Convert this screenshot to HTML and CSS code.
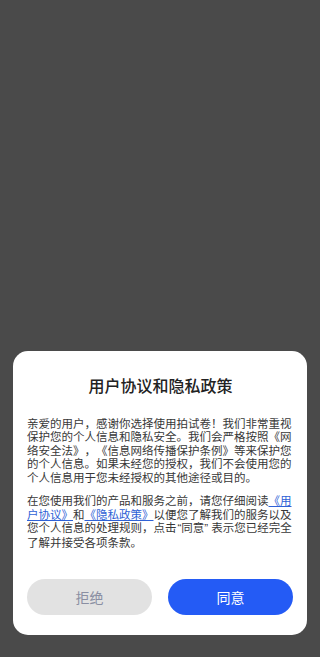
FILE: index.html
```html
<!DOCTYPE html>
<html lang="zh-CN">
<head>
    <meta charset="UTF-8">
    <meta name="viewport" content="width=device-width, initial-scale=1.0">
    <title>用户协议和隐私政策</title>
    <link rel="stylesheet" href="styles.css">
</head>
<body>
    <div class="mask">
        <div class="dialog">
            <h1 class="dialog-title">用户协议和隐私政策</h1>
            <div class="dialog-body">
                <p>亲爱的用户，感谢你选择使用拍试卷！我们非常重视保护您的个人信息和隐私安全。我们会严格按照《网络安全法》，《信息网络传播保护条例》等来保护您的个人信息。如果未经您的授权，我们不会使用您的个人信息用于您未经授权的其他途径或目的。</p>
                <p>在您使用我们的产品和服务之前，请您仔细阅读<a href="#" class="link">《用户协议》</a>和<a href="#" class="link">《隐私政策》</a>以便您了解我们的服务以及您个人信息的处理规则，点击<span class="quote">“</span>同意<span class="quote quote-close">”</span>表示您已经完全了解并接受各项条款。</p>
            </div>
            <div class="dialog-actions">
                <button class="btn btn-refuse">拒绝</button>
                <button class="btn btn-agree">同意</button>
            </div>
        </div>
    </div>
</body>
</html>
```

FILE: styles.css
```css
* {
    margin: 0;
    padding: 0;
    box-sizing: border-box;
    font-family: "Noto Sans CJK SC", "Noto Sans", sans-serif;
}

html, body {
    height: 100%;
}

body {
    background: #4a4a4a;
}

.mask {
    min-height: 100vh;
    display: flex;
    flex-direction: column;
    justify-content: flex-end;
    padding: 0 13px 22px;
}

.dialog {
    background: #fff;
    border-radius: 15px;
    padding: 21px 13px 20px 14px;
}

.dialog-title {
    font-size: 16px;
    font-weight: 500;
    color: #222;
    text-align: center;
    line-height: 26px;
    margin-bottom: 19px;
}

.dialog-body {
    font-size: 11.5px;
    line-height: 13.5px;
    color: #383838;
    text-spacing-trim: space-all;
}

.dialog-body p + p {
    margin-top: 10px;
}

.link {
    color: #2f62d6;
    text-decoration: underline;
}

.quote {
    font-family: "Liberation Sans", sans-serif;
    margin-left: 1px;
}

.quote-close {
    margin: 0 3px 0 0;
}

.dialog-actions {
    display: flex;
    gap: 16px;
    margin-top: 30px;
    padding-right: 1px;
}

.btn {
    flex: 1;
    height: 36px;
    border: none;
    border-radius: 18px;
    font-size: 14px;
    cursor: pointer;
}

.btn-refuse {
    background: #e2e2e2;
    color: #8a8fa3;
}

.btn-agree {
    background: #245bf5;
    color: #fff;
}
```
